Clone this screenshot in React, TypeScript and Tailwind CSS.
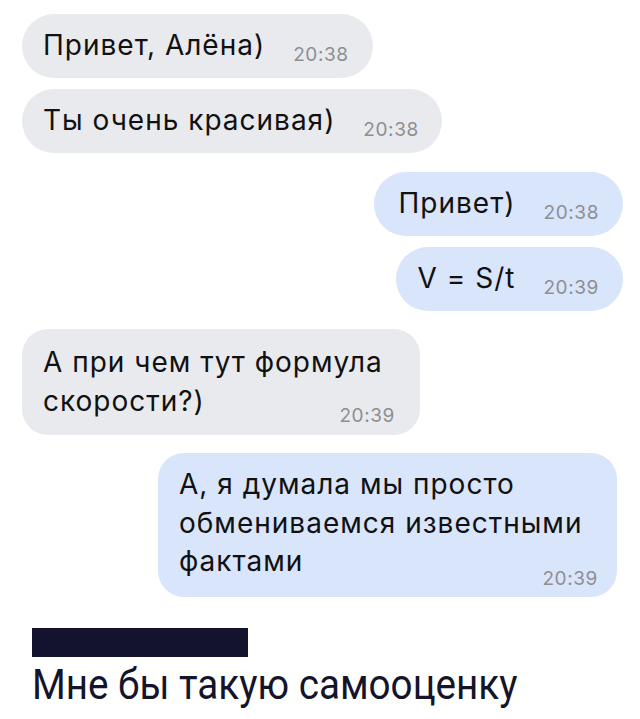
import React from 'react';

type Msg = {
    lines: string[];
    time: string;
    mine?: boolean;
};

const Time = ({ time }: { time: string }) => (
    <span className="text-[19px] leading-[19px] tracking-[0.6px] text-[#8e8e93]">{time}</span>
);

// one-line bubble, fully rounded pill
const Pill = ({ text, time, mine = false, pad }: { text: string; time: string; mine?: boolean; pad: string }) => (
    <div
        className={`h-[64px] rounded-full flex items-center whitespace-nowrap ${pad} ${
            mine ? 'self-end mr-[17px] bg-[#d9e5fa]' : 'self-start ml-[22px] bg-[#e9eaee]'
        }`}
    >
        <span className="flex items-baseline gap-[28px]">
            <span className="text-[28px] leading-[28px] tracking-[1px] text-[#111]">{text}</span>
            <span className="translate-y-[6px] inline-block">
                <Time time={time} />
            </span>
        </span>
    </div>
);

const Block = ({ msg, box, lead, shift }: { msg: Msg; box: string; lead: string; shift: string }) => (
    <div className={`grid rounded-[26px] whitespace-nowrap ${box} ${msg.mine ? 'bg-[#d9e5fa]' : 'bg-[#e9eaee]'}`}>
        <p className={`col-start-1 row-start-1 text-[28px] tracking-[1px] text-[#111] ${lead}`}>
            {msg.lines.map((l, i) => (
                <React.Fragment key={i}>
                    {l}
                    {i < msg.lines.length - 1 && <br />}
                </React.Fragment>
            ))}
        </p>
        <span className={`col-start-1 row-start-1 self-end justify-self-end inline-block ${shift}`}>
            <Time time={msg.time} />
        </span>
    </div>
);

export default function App() {
    return (
        <div className="w-[640px] h-[719px] bg-white overflow-hidden flex flex-col pt-[14px] font-['Inter','Liberation_Sans',sans-serif]">
            <Pill text="Привет, Алёна)" time="20:38" pad="pl-[21px] pr-[24px]" />
            <div className="mt-[11px] flex flex-col">
                <Pill text="Ты очень красивая)" time="20:38" pad="pl-[21px] pr-[23px]" />
            </div>
            <div className="mt-[19px] flex flex-col">
                <Pill text="Привет)" time="20:38" mine pad="pl-[25px] pr-[24px]" />
            </div>
            <div className="mt-[11px] flex flex-col">
                <Pill text="V = S/t" time="20:39" mine pad="pl-[22px] pr-[24px]" />
            </div>

            <Block
                msg={{ lines: ['А при чем тут формула', 'скорости?)'], time: '20:39' }}
                box="mt-[18px] ml-[22px] w-[398px] h-[106px] pl-[21px] pr-[25px] pt-[14px]"
                lead="leading-[39px]"
                shift="translate-y-[-7px]"
            />
            <Block
                msg={{ lines: ['А, я думала мы просто', 'обмениваемся известными', 'фактами'], time: '20:39', mine: true }}
                box="mt-[18px] self-end mr-[23px] w-[459px] h-[144px] pl-[21px] pr-[19px] pt-[12px]"
                lead="leading-[38.5px]"
                shift="translate-y-[-6px]"
            />

            <div className="mt-[31px] ml-[32px] w-[216px] h-[29px] bg-[#14132d]" />
            <div className="mt-[7px] ml-[32px] text-[42px] leading-[42px] text-[#14142a] whitespace-nowrap font-['Roboto','Liberation_Sans',sans-serif]">
                <span className="inline-block origin-left scale-x-[0.92]">Мне бы такую самооценку</span>
            </div>
        </div>
    );
}
